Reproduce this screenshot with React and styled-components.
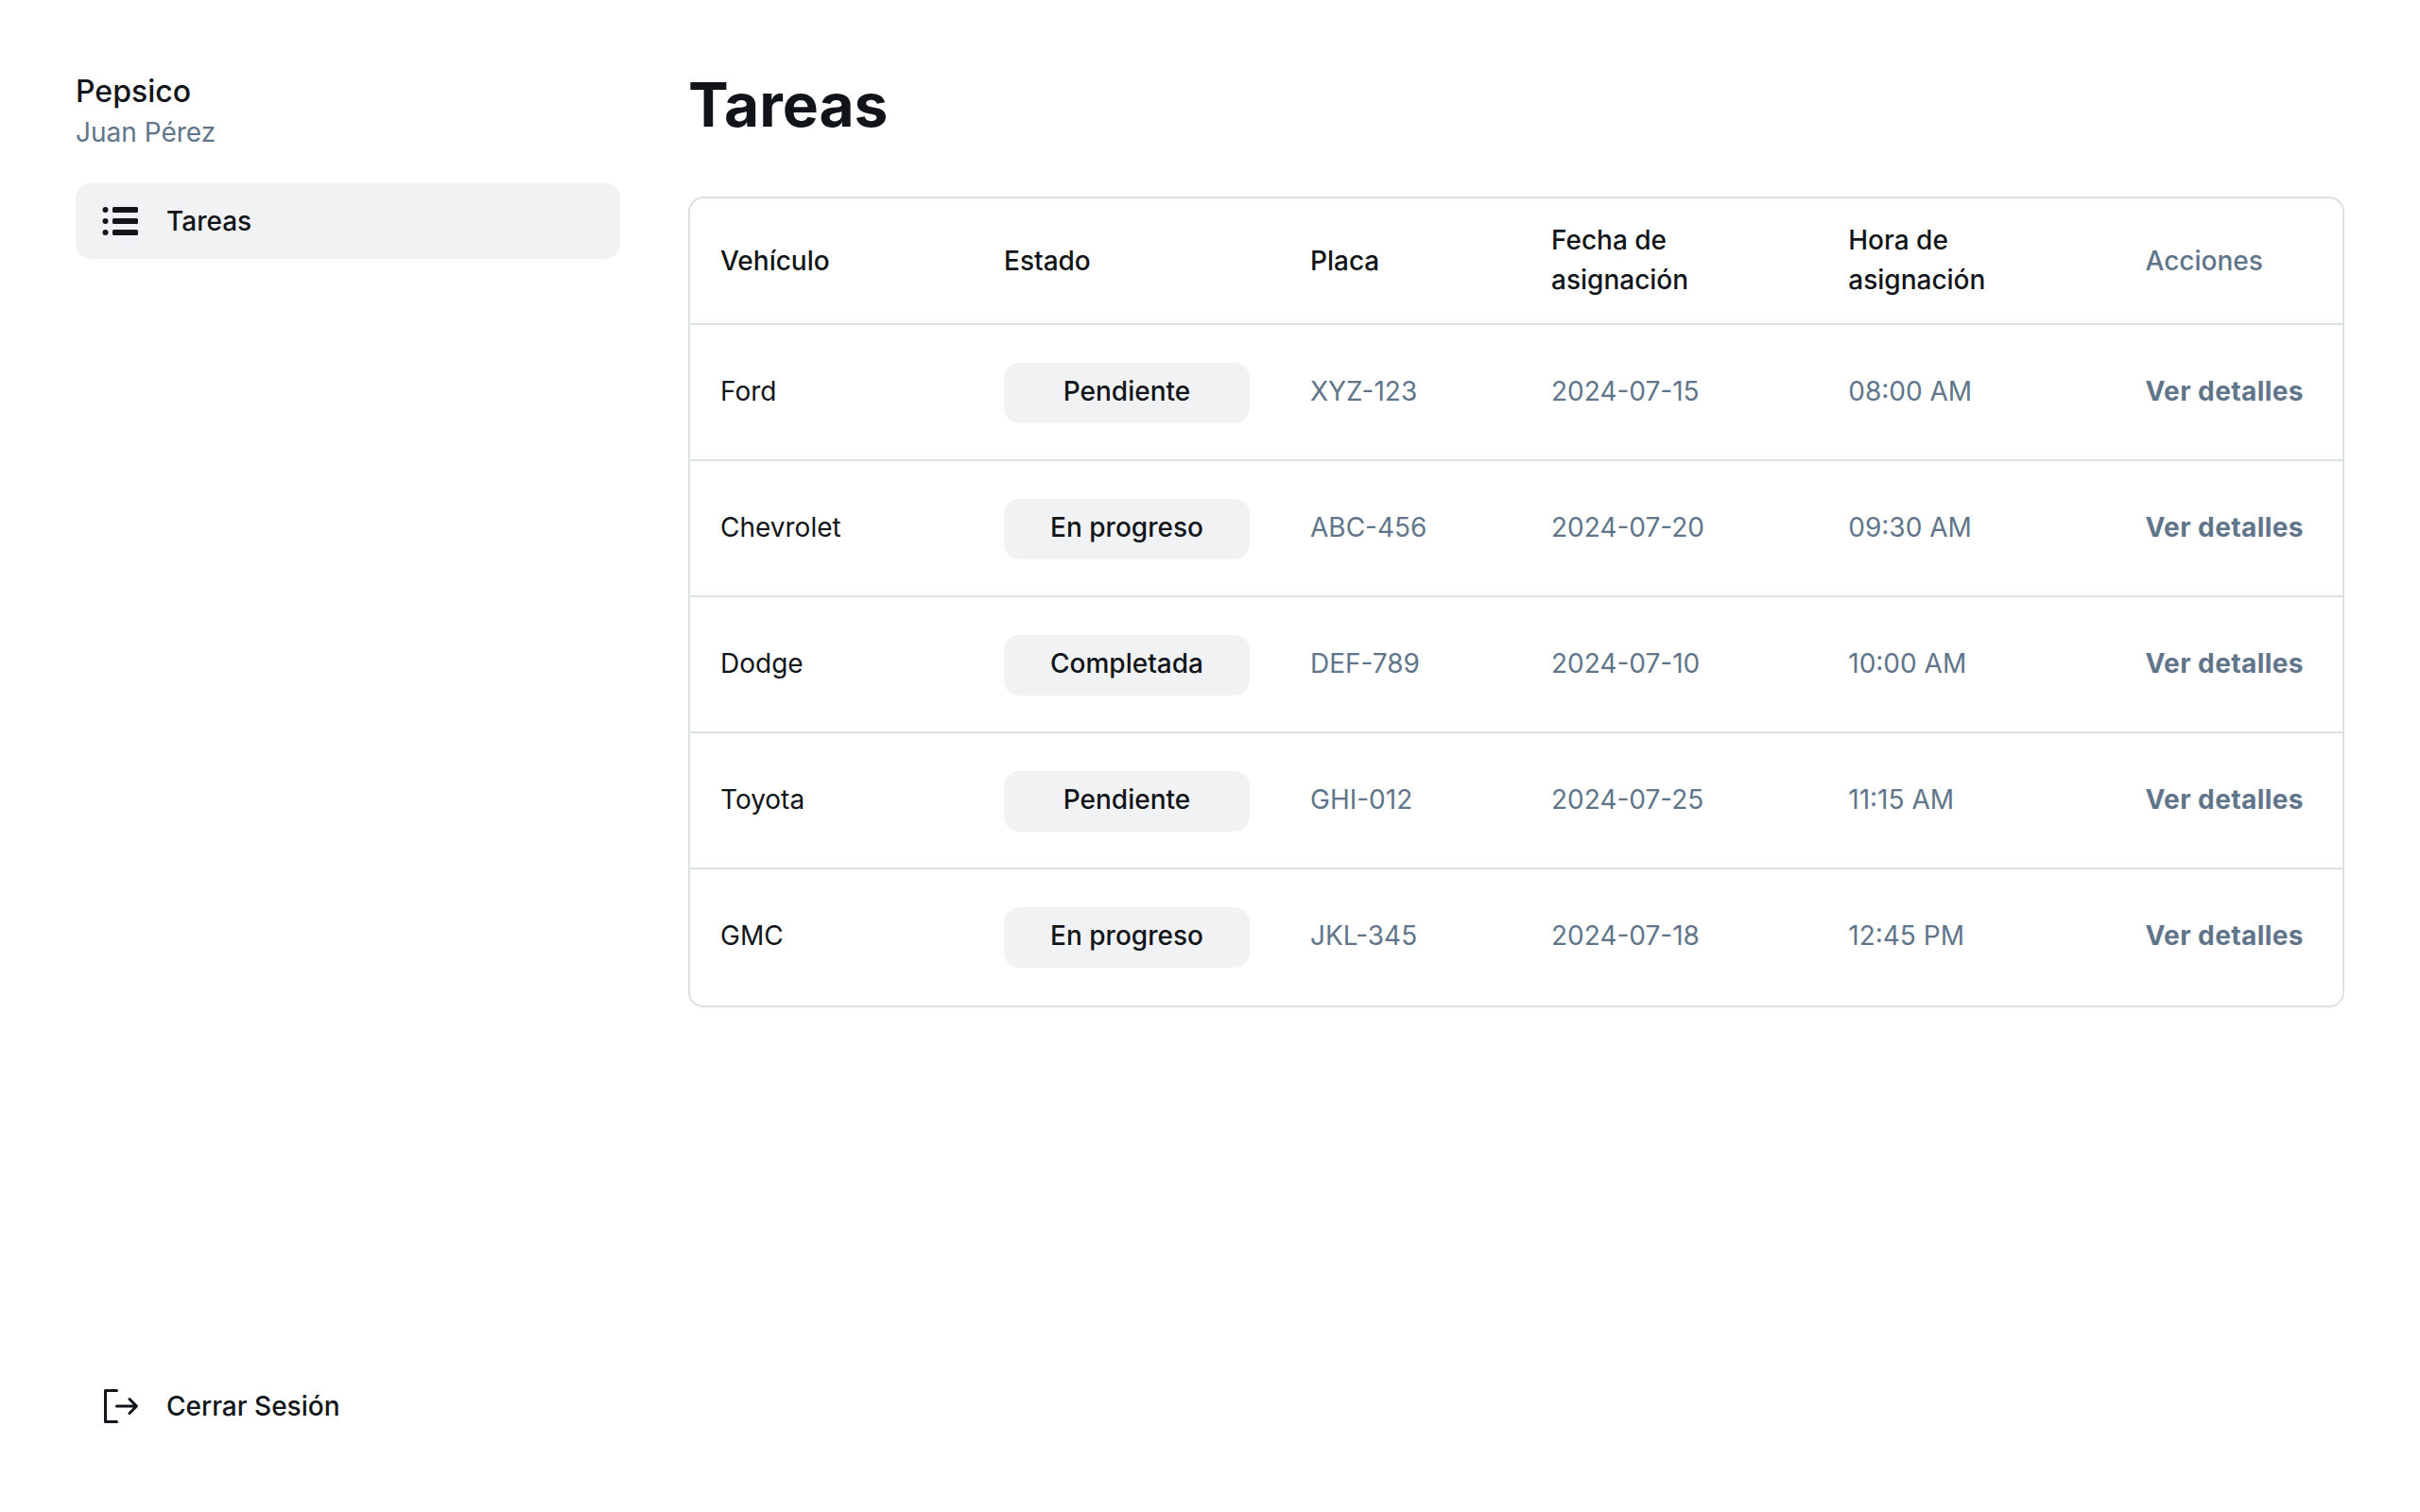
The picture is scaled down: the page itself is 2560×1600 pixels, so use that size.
import React from 'react';
import styled, { createGlobalStyle } from 'styled-components';

const INK = '#111418';
const MUTED = '#60758a';
const LINE = '#dbe0e6';
const FILL = '#f0f2f4';

const GlobalStyle = createGlobalStyle`
  *, *::before, *::after { box-sizing: border-box; }
  body {
    margin: 0;
    background: #ffffff;
    color: ${INK};
    font-family: Inter, "Noto Sans", sans-serif;
    font-size: 28px;
    line-height: 42px;
  }
`;

const Layout = styled.div`
  display: flex;
  width: 100%;
  min-height: 100vh;
  padding: 40px 48px;
`;

const Sidebar = styled.aside`
  display: flex;
  flex-direction: column;
  justify-content: space-between;
  width: 640px;
  padding: 32px;
`;

const SidebarTop = styled.div`
  display: flex;
  flex-direction: column;
  gap: 32px;
`;

const Company = styled.h1`
  margin: 0;
  padding-top: 1px;
  font-size: 32px;
  font-weight: 500;
  line-height: 48px;
`;

const UserName = styled.p`
  margin: -2px 0 1px;
  color: ${MUTED};
`;

const NavItem = styled.a`
  display: flex;
  align-items: center;
  gap: 24px;
  height: 80px;
  padding: 16px 24px;
  border-radius: 16px;
  background: ${(p) => (p.$active ? FILL : 'transparent')};
  font-weight: 500;
`;

const Icon = styled.svg`
  display: block;
  width: 48px;
  height: 48px;
  fill: currentColor;
`;

const Main = styled.main`
  flex: 1;
  padding: 31px 32px 0 40px;
`;

const Title = styled.h2`
  margin: 0 0 57px;
  font-size: 64px;
  font-weight: 700;
  line-height: 80px;
`;

const Table = styled.div`
  border: 2px solid ${LINE};
  border-radius: 16px;
  overflow: hidden;
`;

const Columns = styled.div`
  display: grid;
  grid-template-columns: 300px 324px 255px 314.25px 314.25px 240.5px;
  align-items: center;
`;

const HeaderRow = styled(Columns)`
  height: 132px;
  font-weight: 500;
`;

const Row = styled(Columns)`
  padding: 40px 0 38px;
  border-top: 2px solid ${LINE};

  &:last-child {
    padding-bottom: 40px;
  }
`;

const Cell = styled.div`
  padding: 0 32px ${(p) => (p.$twoLine ? '2px' : '0')};
  color: ${(p) => (p.$muted ? MUTED : INK)};
`;

const Label = styled.span`
  display: block;
  margin-top: -4px;
  font-weight: ${(p) => (p.$bold ? 700 : 400)};
  letter-spacing: ${(p) => (p.$bold ? '0.42px' : 'normal')};
  white-space: nowrap;
`;

const Status = styled.button`
  display: flex;
  justify-content: center;
  width: 100%;
  height: 64px;
  padding: 9px 32px 0;
  border: 0;
  border-radius: 16px;
  background: ${FILL};
  color: ${INK};
  font: inherit;
  font-weight: 500;
  white-space: nowrap;
`;

const ListIcon = () => (
  <Icon viewBox="0 0 256 256">
    <path d="M56,128a16,16,0,1,1-16-16A16,16,0,0,1,56,128ZM40,48A16,16,0,1,0,56,64,16,16,0,0,0,40,48Zm0,128a16,16,0,1,0,16,16A16,16,0,0,0,40,176Zm176-64H88a8,8,0,0,0-8,8v16a8,8,0,0,0,8,8H216a8,8,0,0,0,8-8V120A8,8,0,0,0,216,112Zm0-64H88a8,8,0,0,0-8,8V72a8,8,0,0,0,8,8H216a8,8,0,0,0,8-8V56A8,8,0,0,0,216,48Zm0,128H88a8,8,0,0,0-8,8v16a8,8,0,0,0,8,8H216a8,8,0,0,0,8-8V184A8,8,0,0,0,216,176Z" />
  </Icon>
);

const SignOutIcon = () => (
  <Icon viewBox="0 0 256 256">
    <path d="M112,216a8,8,0,0,1-8,8H40a8,8,0,0,1-8-8V40a8,8,0,0,1,8-8h64a8,8,0,0,1,0,16H48V208h56A8,8,0,0,1,112,216Zm109.66-93.66-40-40a8,8,0,0,0-11.32,11.32L196.69,120H104a8,8,0,0,0,0,16h92.69l-26.35,26.34a8,8,0,0,0,11.32,11.32l40-40A8,8,0,0,0,221.66,122.34Z" />
  </Icon>
);

const tasks = [
  { vehicle: 'Ford', status: 'Pendiente', plate: 'XYZ-123', date: '2024-07-15', time: '08:00 AM' },
  { vehicle: 'Chevrolet', status: 'En progreso', plate: 'ABC-456', date: '2024-07-20', time: '09:30 AM' },
  { vehicle: 'Dodge', status: 'Completada', plate: 'DEF-789', date: '2024-07-10', time: '10:00 AM' },
  { vehicle: 'Toyota', status: 'Pendiente', plate: 'GHI-012', date: '2024-07-25', time: '11:15 AM' },
  { vehicle: 'GMC', status: 'En progreso', plate: 'JKL-345', date: '2024-07-18', time: '12:45 PM' },
];

export default function App() {
  return (
    <>
      <GlobalStyle />
      <Layout>
        <Sidebar>
          <SidebarTop>
            <div>
              <Company>Pepsico</Company>
              <UserName>Juan Pérez</UserName>
            </div>
            <NavItem $active>
              <ListIcon />
              Tareas
            </NavItem>
          </SidebarTop>
          <NavItem>
            <SignOutIcon />
            Cerrar Sesión
          </NavItem>
        </Sidebar>
        <Main>
          <Title>Tareas</Title>
          <Table>
            <HeaderRow>
              <Cell>Vehículo</Cell>
              <Cell>Estado</Cell>
              <Cell>Placa</Cell>
              <Cell $twoLine>Fecha de<br />asignación</Cell>
              <Cell $twoLine>Hora de<br />asignación</Cell>
              <Cell $muted>Acciones</Cell>
            </HeaderRow>
            {tasks.map((t) => (
              <Row key={t.plate}>
                <Cell><Label>{t.vehicle}</Label></Cell>
                <Cell><Status>{t.status}</Status></Cell>
                <Cell $muted><Label>{t.plate}</Label></Cell>
                <Cell $muted><Label>{t.date}</Label></Cell>
                <Cell $muted><Label>{t.time}</Label></Cell>
                <Cell $muted><Label $bold>Ver detalles</Label></Cell>
              </Row>
            ))}
          </Table>
        </Main>
      </Layout>
    </>
  );
}
